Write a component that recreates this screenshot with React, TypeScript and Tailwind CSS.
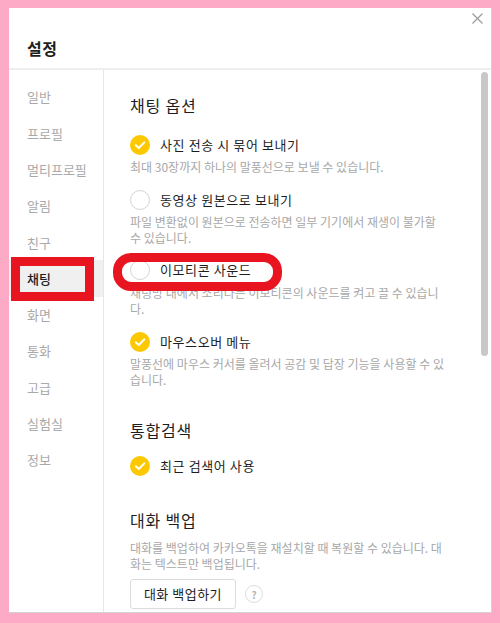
import React from "react";

const KR = { fontFamily: '"Noto Sans CJK KR", "Noto Sans", sans-serif' };

const menu = ["일반", "프로필", "멀티프로필", "알림", "친구", "채팅", "화면", "통화", "고급", "실험실", "정보"];

function Check({ on }: { on: boolean }) {
  if (!on) {
    return <span className="h-[20px] w-[20px] shrink-0 rounded-full border border-[#d4d4d4] bg-white" />;
  }
  return (
    <svg width="20" height="20" viewBox="0 0 20 20" className="shrink-0">
      <circle cx="10" cy="10" r="10" fill="#fcc800" />
      <path d="M5.8 10.2 L8.8 13 L14.3 7.4" fill="none" stroke="#fff" strokeWidth="2" strokeLinecap="round" strokeLinejoin="round" />
    </svg>
  );
}

function Option({ on, label, className = "" }: { on: boolean; label: string; className?: string }) {
  return (
    <div className={`flex h-[20px] items-center gap-[10px] ${className}`}>
      <Check on={on} />
      <span className="text-[13px] leading-[20px] tracking-[0.6px] text-[#1e1e1e]">{label}</span>
    </div>
  );
}

function Desc({ lines, className = "" }: { lines: string[]; className?: string }) {
  return (
    <div className={`text-[12px] leading-[16px] text-[#a8a8a8] ${className}`}>
      {lines.map((l) => (
        <div key={l} className="whitespace-nowrap">{l}</div>
      ))}
    </div>
  );
}

export default function App() {
  return (
    <div className="relative h-[623px] w-[500px] overflow-hidden bg-[#fdaac6] pl-[9px] pt-[8px]" style={KR}>
      <div className="flex h-[605px] w-[483px] flex-col border-b border-r border-[#d2d2d2] bg-white">
        {/* header */}
        <div className="relative h-[62px] shrink-0 border-b-2 border-[#eeeeee] pl-[18px] pt-[30px]">
          <h1 className="text-[16px] font-bold leading-[20px] tracking-[0.5px] text-[#1e1e1e]">설정</h1>
          <svg width="11" height="11" viewBox="0 0 11 11" className="absolute right-[8px] top-[5px]">
            <path d="M0.5 0.5 L10.5 10.5 M10.5 0.5 L0.5 10.5" stroke="#9a9a9a" strokeWidth="1.2" />
          </svg>
        </div>

        <div className="relative flex min-h-0 flex-1">
          {/* sidebar */}
          <div className="w-[95px] shrink-0 border-r border-[#e6e6e6] pt-[9px]">
            {menu.map((m) => (
              <div
                key={m}
                className={`flex h-[36.3px] items-center pl-[18px] text-[13px] ${
                  m === "채팅" ? "bg-[#f0f0f0] font-medium text-[#1e1e1e]" : "text-[#a9a9a9]"
                }`}
              >
                {m}
              </div>
            ))}
          </div>

          {/* content */}
          <div className="flex-1 pl-[26px] pt-[25px]">
            <h2 className="text-[16px] leading-[20px] tracking-[0.8px] text-[#1e1e1e]">채팅 옵션</h2>
            <Option on label="사진 전송 시 묶어 보내기" className="mt-[20px]" />
            <Desc lines={["최대 30장까지 하나의 말풍선으로 보낼 수 있습니다."]} className="mt-[4px]" />
            <Option on={false} label="동영상 원본으로 보내기" className="mt-[15px]" />
            <Desc
              lines={["파일 변환없이 원본으로 전송하면 일부 기기에서 재생이 불가할", "수 있습니다."]}
              className="mt-[4px]"
            />
            <Option on={false} label="이모티콘 사운드" className="mt-[14px]" />
            <Desc
              lines={["채팅방 내에서 소리나는 이모티콘의 사운드를 켜고 끌 수 있습니", "다."]}
              className="mt-[5px]"
            />
            <Option on label="마우스오버 메뉴" className="mt-[15px]" />
            <Desc
              lines={["말풍선에 마우스 커서를 올려서 공감 및 답장 기능을 사용할 수 있", "습니다."]}
              className="mt-[4px]"
            />

            <h2 className="mt-[32px] text-[16px] leading-[20px] tracking-[0.8px] text-[#1e1e1e]">통합검색</h2>
            <Option on label="최근 검색어 사용" className="mt-[16px]" />

            <h2 className="mt-[34px] text-[16px] leading-[20px] tracking-[0.8px] text-[#1e1e1e]">대화 백업</h2>
            <Desc
              lines={["대화를 백업하여 카카오톡을 재설치할 때 복원할 수 있습니다. 대", "화는 텍스트만 백업됩니다."]}
              className="mt-[10px]"
            />
            <div className="mt-[7px] flex items-center gap-[9px]">
              <button className="h-[30px] w-[106px] rounded-[3px] border border-[#dcdcdc] bg-white text-[13px] tracking-[0.5px] text-[#1e1e1e]">
                대화 백업하기
              </button>
              <span className="flex h-[18px] w-[18px] items-center justify-center rounded-full border border-[#dedede] text-[10px] font-bold text-[#b5b5b5]">
                ?
              </span>
            </div>
          </div>

          {/* scrollbar */}
          <div className="absolute right-[3px] top-[2px] h-[284px] w-[7px] rounded-full bg-[#c8c8c8]" />
        </div>
      </div>

      {/* annotation marks */}
      <div className="absolute left-[11px] top-[257px] h-[44px] w-[83px] border-[9px] border-[#e8141f]" />
      <div className="absolute left-[113px] top-[253px] h-[38px] w-[169px] rounded-[18px] border-[9px] border-[#e8141f]" />
    </div>
  );
}
